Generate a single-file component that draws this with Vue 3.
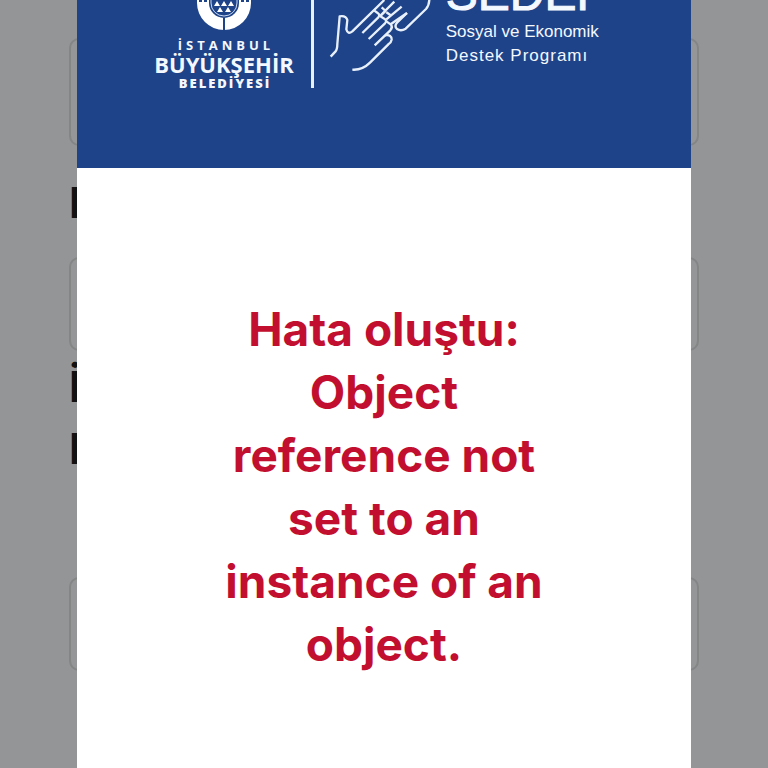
<script setup>
const title = 'Hata oluştu: Object reference not set to an instance of an object.'
</script>

<template>
  <div class="page">
    <form class="form" @submit.prevent>
      <input class="field tall" aria-labelledby="label-one" />
      <label id="label-one" class="label" for="field-one">I</label>
      <input id="field-one" class="field" />
      <label class="label double" for="field-two">İ<br />I</label>
      <input id="field-two" class="field" />
    </form>

    <section class="modal" role="alertdialog" aria-labelledby="message">
      <header class="banner">
        <div class="city">
          <svg class="emblem" viewBox="0 0 56 40" aria-hidden="true">
            <path d="M1 8h2v3h3V9h2v2h3V9h34v2h3V9h2v2h3V8h2v4a27 27 0 0 1-54 0z" fill="#fff" />
            <path d="M13 8v4a15 15 0 0 0 30 0V8z" fill="#1e4389" />
            <path d="M15 8v4a13 13 0 0 0 26 0V8" fill="none" stroke="#c9d9f2" stroke-width="1" />
            <path d="M28 27v13" stroke="#1e4389" stroke-width="2" />
            <path d="M21 10l3 5h-6zM28 10l3 5h-6zM35 10l3 5h-6zM24 16l3 5h-6zM32 16l3 5h-6z" fill="#fff" />
          </svg>
          <span class="istanbul">İSTANBUL</span>
          <span class="municipality">BÜYÜKŞEHİR</span>
          <span class="belediyesi">BELEDİYESİ</span>
        </div>
        <div class="rule"></div>
        <svg class="hands" viewBox="45 0 330 225" fill="none" stroke="#e8f0fb" stroke-width="7" stroke-linejoin="round" aria-hidden="true">
          <path d="M59 170L73 155Q79 148 79 132L86 49Q105 46 109 60L106 88Q110 105 124 94L220 0" />
          <path d="M154 99L202 52Q208 44 200 39L190 32" />
          <path d="M173 117L222 70Q229 62 221 57L207 48L250 5M212 22L224 33L210 46" />
          <path d="M226 58L272 20M226 37L238 45" />
          <path d="M191 136L238 91Q246 82 240 74L226 64M240 72L288 39" />
          <path d="M222 106Q243 103 242 119Q241 127 232 133L177 188Q154 211 124 209" />
          <path d="M288 39L258 68Q249 78 258 87Q270 95 284 86L345 27Q354 17 355 0" />
        </svg>
        <div class="program">
          <strong>SEDEF</strong>
          <span>Sosyal ve Ekonomik</span>
          <span class="tracked">Destek Programı</span>
        </div>
      </header>
      <div class="body">
        <h1 id="message">{{ title }}</h1>
      </div>
    </section>
  </div>
</template>

<style>
body {
  background: #939597;
}
</style>

<style scoped>
.page {
  display: grid;
  height: 100vh;
  overflow: hidden;
  background: #939597;
  font-family: Inter, "Liberation Sans", sans-serif;
}

.form,
.modal {
  grid-area: 1 / 1;
  min-width: 0;
}

.form {
  display: flex;
  flex-direction: column;
  padding: 38px 9% 0;
}

.field {
  box-sizing: border-box;
  width: 100%;
  height: 94px;
  flex: none;
  border: 2px solid #848585;
  border-radius: 10px;
  background: #959697;
}

.tall {
  height: 108px;
}

.label {
  margin: 26px 0 23px;
  color: #111214;
  font-size: 42px;
  font-weight: 700;
  line-height: 62px;
}

.double {
  margin: 5px 0 97px;
}

.modal {
  z-index: 1;
  justify-self: center;
  width: 80%;
  background: #fff;
}

.banner {
  box-sizing: border-box;
  display: flex;
  align-items: flex-end;
  justify-content: center;
  height: 168px;
  padding: 0 8px 76px 0;
  overflow: hidden;
  background: #1e4389;
  color: #f4f8ff;
}

.city {
  display: flex;
  flex-direction: column;
  align-items: center;
  font-family: "Open Sans", sans-serif;
  font-weight: 700;
  white-space: nowrap;
}

.emblem {
  width: 56px;
  height: 40px;
  margin-bottom: 5px;
}

.istanbul {
  padding-left: 4px;
  font-size: 13px;
  line-height: 18px;
  letter-spacing: 4px;
}

.municipality {
  font-size: 22px;
  line-height: 20px;
}

.belediyesi {
  padding-left: 2px;
  font-size: 13px;
  font-weight: 800;
  line-height: 18px;
  letter-spacing: 2px;
}

.rule {
  width: 3px;
  height: 96px;
  margin: 0 12px 4px 17px;
  background: #e8f0fb;
}

.hands {
  width: 110px;
  height: 75px;
  margin: 0 10px 17px 0;
}

.program {
  display: flex;
  flex-direction: column;
  padding-bottom: 24px;
  font-family: "Liberation Sans", Arial, sans-serif;
  font-size: 17px;
  line-height: 24px;
  white-space: nowrap;
}

.program strong {
  font-size: 48px;
  font-weight: 400;
  line-height: 52px;
  -webkit-text-stroke: 1px currentColor;
}

.tracked {
  letter-spacing: 1px;
}

.body {
  display: flex;
  justify-content: center;
  padding-top: 130px;
}

h1 {
  width: 330px;
  margin: 0;
  color: #c20f2f;
  font-size: 46px;
  font-weight: 700;
  line-height: 63px;
  text-align: center;
}
</style>
